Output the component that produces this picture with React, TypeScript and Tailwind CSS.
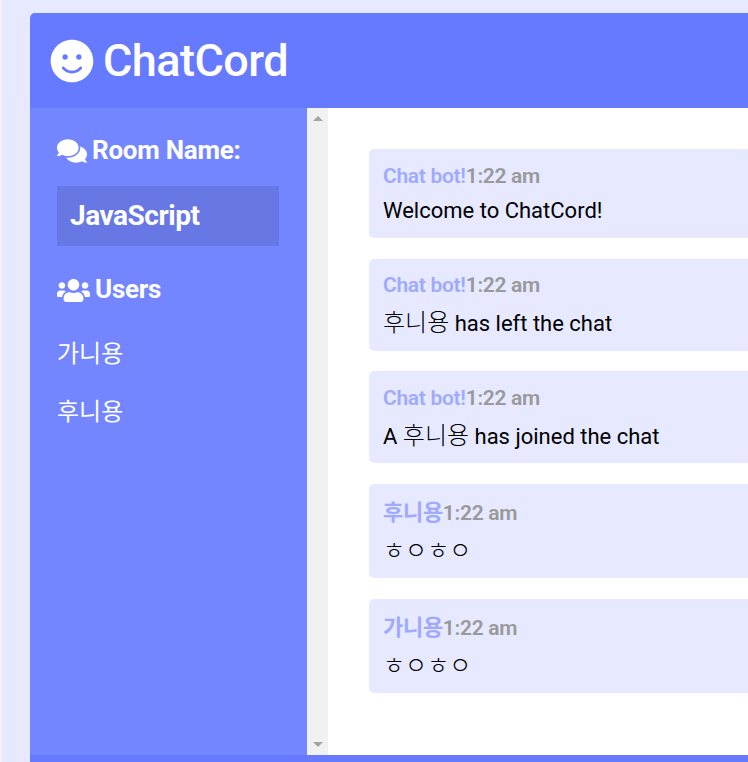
import { FaComments, FaSmile, FaUsers } from "react-icons/fa";

const messages = [
  { name: "Chat bot!", text: "Welcome to ChatCord!", box: "h-[89px] pt-[14px]", gap: "mt-[8px]" },
  { name: "Chat bot!", text: "후니용 has left the chat", box: "h-[92px] pt-[13px]", gap: "mt-[11px]" },
  { name: "Chat bot!", text: "A 후니용 has joined the chat", box: "h-[92px] pt-[14px]", gap: "mt-[11px]" },
  { name: "후니용", text: "ㅎㅇㅎㅇ", box: "h-[94.4px] pt-[16px]", gap: "mt-[11px]" },
  { name: "가니용", text: "ㅎㅇㅎㅇ", box: "h-[94.4px] pt-[16px]", gap: "mt-[11px]" },
];

const font = "font-['Roboto','Noto_Sans_CJK_KR',sans-serif]";

// korean runs are drawn larger than the latin text around them
function Hangul({ text, size }: { text: string; size: string }) {
  return (
    <>
      {text.split(/([\u3131-\u318E\uAC00-\uD7A3]+)/).map((part, i) =>
        i % 2 === 1 ? (
          <span key={i} className={size}>
            {part}
          </span>
        ) : (
          part
        ),
      )}
    </>
  );
}

function Message({ name, text, box, gap }: { name: string; text: string; box: string; gap: string }) {
  return (
    <div className={`${box} w-[500px] shrink-0 rounded-[5px] bg-[#e6e9ff] pl-[14px]`}>
      <p className="text-[21px] leading-[26px] font-semibold tracking-[-0.3px] text-[#9fa9ff]">
        <Hangul text={name} size="text-[22px] font-bold" />
        <span className="text-[#999999]">1:22 am</span>
      </p>
      <p className={`${gap} text-[22px] leading-[28px] text-black`}>
        <Hangul text={text} size="text-[24px] font-light" />
      </p>
    </div>
  );
}

export default function App() {
  return (
    <div className={`${font} flex h-[762px] w-[748px] overflow-hidden bg-[#e6e9ff]`}>
      <div className="w-[2px] shrink-0 bg-[#f1f1f1]" />
      <div className="mt-[13px] ml-[28px] flex w-[718px] shrink-0 flex-col overflow-hidden rounded-tl-[5px]">
        <header className="flex h-[95px] shrink-0 items-center gap-[9px] bg-[#667aff] pl-5 text-white">
          <FaSmile size={44} />
          <h1 className="text-[45px] leading-none font-medium tracking-[-0.55px]">ChatCord</h1>
        </header>
        <div className="flex h-[647px] shrink-0">
          <aside className="w-[277px] shrink-0 bg-[#7386ff] pt-[25px] pl-[27px] text-white">
            <h3 className="flex h-[36px] items-center gap-[5px] text-[26px] font-bold tracking-[-0.25px]">
              <FaComments size={30} />
              <span className="mb-[2px]">Room Name:</span>
            </h3>
            <h2 className="mt-[17px] flex h-[60px] w-[222px] items-center bg-black/10 pl-[13px] text-[28px] font-bold tracking-[-0.45px]">
              JavaScript
            </h2>
            <h3 className="mt-[26px] flex h-[36px] items-center gap-[5px] text-[26px] font-bold tracking-[-0.25px]">
              <FaUsers size={33} />
              <span className="mb-[2px]">Users</span>
            </h3>
            <ul className="mt-[30px] flex flex-col gap-[26px] text-[24px] leading-[32px] font-normal">
              <li>가니용</li>
              <li>후니용</li>
            </ul>
          </aside>
          <div className="flex w-[21px] shrink-0 flex-col items-center justify-between bg-[#f1f1f1] py-[8px]">
            <svg width="10" height="5" viewBox="0 0 10 5" className="fill-[#a3a3a3]">
              <path d="M5 0l5 5H0z" />
            </svg>
            <svg width="10" height="5" viewBox="0 0 10 5" className="fill-[#a3a3a3]">
              <path d="M0 0h10L5 5z" />
            </svg>
          </div>
          <main className="flex min-w-0 flex-1 flex-col gap-[20.6px] bg-white pt-[41px] pl-[41px]">
            {messages.map((m, i) => (
              <Message key={i} {...m} />
            ))}
          </main>
        </div>
        <div className="h-[7px] shrink-0 bg-[#667aff]" />
      </div>
    </div>
  );
}
